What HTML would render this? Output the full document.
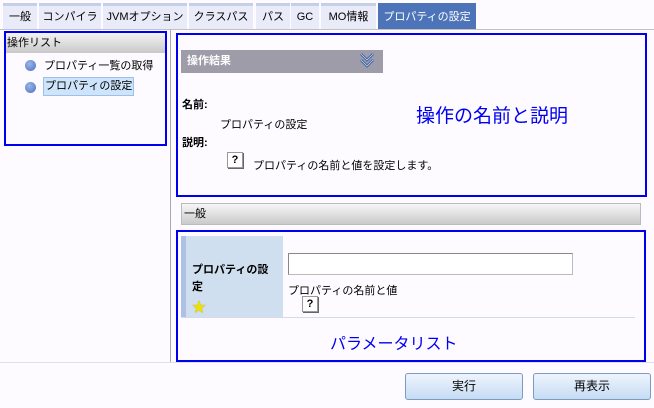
<!DOCTYPE html><html><head><meta charset="utf-8"><style>
*{margin:0;padding:0;box-sizing:border-box}
body{width:654px;height:408px;background:#fdfbff;font-family:"Liberation Sans","Noto Sans CJK JP",sans-serif;font-size:11px;color:#000;position:relative;overflow:hidden;white-space:nowrap}
.a{position:absolute}
.tab{position:absolute;top:3px;height:26px;background:#e9ebf8;border-top:3px solid #c5d0e6;text-align:center;line-height:23px;font-size:11px}
.tab.on{background:#4d74b8;color:#fff;border-top-color:#4d74b8}
.bb{position:absolute;border:2px solid #0000f0}
.q{position:absolute;width:16px;height:16px;border:1px solid #999;background:#fff;font-weight:bold;font-size:11px;text-align:center;line-height:14px;box-shadow:1px 1px 0 #666}
.btn{position:absolute;top:373px;width:118px;height:27px;border:1px solid #7a9cc0;border-radius:3px;background:linear-gradient(#eef5fd,#c6dcf3);text-align:center;line-height:25px;font-size:12px}
</style></head><body>
<div class="tab" style="left:3px;width:34px">一般</div>
<div class="tab" style="left:39px;width:62px">コンパイラ</div>
<div class="tab" style="left:103px;width:84px">JVMオプション</div>
<div class="tab" style="left:189px;width:64px">クラスパス</div>
<div class="tab" style="left:256px;width:34px">パス</div>
<div class="tab" style="left:291px;width:28px">GC</div>
<div class="tab" style="left:321px;width:55px">MO情報</div>
<div class="tab on" style="left:378px;width:98px">プロパティの設定</div>
<div class="a" style="left:0;top:29px;width:654px;height:1px;background:#c0c0c8"></div>
<div class="a" style="left:170px;top:30px;width:1px;height:333px;background:#a8a8b0"></div>
<div class="a" style="left:0;top:362px;width:654px;height:1px;background:#e0e0e8"></div>
<div class="bb" style="left:4px;top:31px;width:163px;height:115px"></div>
<div class="a" style="left:6px;top:33px;width:159px;height:20px;background:linear-gradient(#f4f4f4,#c8c8c8);line-height:20px;padding-left:1px">操作リスト</div>
<div class="a" style="left:25px;top:60px;width:11px;height:11px;border-radius:50%;background:radial-gradient(circle at 40% 35%,#9bb5e8,#4a70c0)"></div>
<div class="a" style="left:44px;top:57px">プロパティ一覧の取得</div>
<div class="a" style="left:25px;top:82px;width:11px;height:11px;border-radius:50%;background:radial-gradient(circle at 40% 35%,#9bb5e8,#4a70c0)"></div>
<div class="a" style="left:43px;top:77px;width:91px;height:19px;background:#cde4fb;border:1px solid #9cc0e6;line-height:17px;padding-left:1px">プロパティの設定</div>
<div class="bb" style="left:176px;top:33px;width:471px;height:164px"></div>
<div class="a" style="left:181px;top:50px;width:202px;height:23px;background:#9d9ca8;color:#fff;font-weight:bold;line-height:23px;padding-left:6px">操作結果</div>
<svg class="a" style="left:359px;top:52px" width="16" height="18" viewBox="0 0 16 18"><path d="M2 2 L8 8 L14 2 M2 8 L8 14 L14 8" fill="none" stroke="#2c4f90" stroke-width="2.5"/><path d="M2 2 L8 8 L14 2 M2 8 L8 14 L14 8" fill="none" stroke="#a8c8f0" stroke-width="1"/></svg>
<div class="a" style="left:182px;top:96px;font-weight:bold">名前:</div>
<div class="a" style="left:220px;top:116px">プロパティの設定</div>
<div class="a" style="left:182px;top:134px;font-weight:bold">説明:</div>
<div class="q" style="left:227px;top:152px">?</div>
<div class="a" style="left:253px;top:157px">プロパティの名前と値を設定します。</div>
<div class="a" style="left:416px;top:101px;color:#0000f0;font-size:19px">操作の名前と説明</div>
<div class="a" style="left:181px;top:203px;width:460px;height:22px;background:linear-gradient(#f6f6f6,#cacaca);border:1px solid #bbb;line-height:20px;padding-left:2px">一般</div>
<div class="bb" style="left:176px;top:230px;width:470px;height:132px"></div>
<div class="a" style="left:181px;top:236px;width:102px;height:81px;background:#cfdff0;border-left:5px solid #adc2e3"></div>
<div class="a" style="left:192px;top:262px;font-weight:bold;line-height:17px">プロパティの設<br>定</div>
<div class="a" style="left:192px;top:297px;color:#f0e000;font-size:14px;text-shadow:0 0 1px #a09000">★</div>
<div class="a" style="left:288px;top:253px;width:285px;height:22px;border:1px solid #888;border-right-color:#bbb;border-bottom-color:#bbb;background:#fff"></div>
<div class="a" style="left:288px;top:282px">プロパティの名前と値</div>
<div class="q" style="left:302px;top:296px">?</div>
<div class="a" style="left:181px;top:317px;width:454px;height:1px;background:#d0dceb"></div>
<div class="a" style="left:330px;top:330px;color:#0000f0;font-size:16px">パラメータリスト</div>
<div class="btn" style="left:405px">実行</div>
<div class="btn" style="left:533px">再表示</div>
</body></html>
